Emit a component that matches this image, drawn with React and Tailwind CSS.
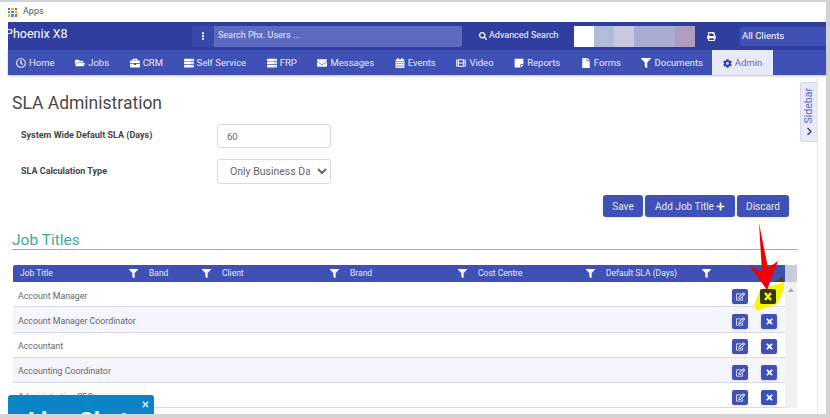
import {
  FaBriefcase,
  FaCalendarAlt,
  FaChevronRight,
  FaCog,
  FaEllipsisV,
  FaEnvelope,
  FaFile,
  FaFilm,
  FaFilter,
  FaFolderOpen,
  FaPlus,
  FaPrint,
  FaRegClock,
  FaRegEdit,
  FaSearch,
  FaServer,
  FaStickyNote,
  FaTimes,
} from 'react-icons/fa'

const NAV = [
  { label: 'Home', icon: FaRegClock },
  { label: 'Jobs', icon: FaFolderOpen },
  { label: 'CRM', icon: FaBriefcase },
  { label: 'Self Service', icon: FaServer },
  { label: 'FRP', icon: FaServer },
  { label: 'Messages', icon: FaEnvelope },
  { label: 'Events', icon: FaCalendarAlt },
  { label: 'Video', icon: FaFilm },
  { label: 'Reports', icon: FaStickyNote },
  { label: 'Forms', icon: FaFile },
  { label: 'Documents', icon: FaFilter },
]

const COLUMNS = ['Job Title', 'Band', 'Client', 'Brand', 'Cost Centre', 'Default SLA (Days)']

const ROWS = [
  'Account Manager',
  'Account Manager Coordinator',
  'Accountant',
  'Accounting Coordinator',
  'Administrative CEO',
]

const SWATCHES = ['bg-white', 'bg-[#b0bcd8]', 'bg-[#c8c8e0]', 'bg-[#a9aed0] w-[41px]', 'bg-[#b09cbc]']

function Row({ title, index }) {
  return (
    <div
      className={`flex h-[25.3px] items-center border-b border-[#d5d9ef] pl-[5px] pr-[8px] pt-[4px] text-[8.8px] text-[#666] ${
        index % 2 ? 'bg-[#f5f6fb]' : 'bg-white'
      }`}
    >
      <span className="flex-1">{title}</span>
      <button className="mr-[13px] flex h-[15px] w-[16px] items-center justify-center rounded-[2px] bg-[#3f51b5] text-white shadow-sm">
        <FaRegEdit className="text-[9px]" />
      </button>
      <button className="flex h-[15px] w-[16px] items-center justify-center rounded-[2px] bg-[#3f51b5] text-white shadow-sm">
        <FaTimes className="text-[9px]" />
      </button>
    </div>
  )
}

export default function App() {
  return (
    <div className="relative flex h-[418px] w-[830px] flex-col overflow-hidden bg-[#d4d4d4] font-['Roboto',sans-serif]">
      <div className="mt-[2px] flex h-[20px] w-[826px] items-center gap-[6px] bg-white pl-[8px] text-[9px] text-[#555]">
        <span className="grid h-[9px] w-[9px] grid-cols-3 gap-[1px]">
          <i className="bg-[#e8453c]" />
          <i className="bg-[#f4b400]" />
          <i className="bg-[#e8453c]" />
          <i className="bg-[#4285f4]" />
          <i className="bg-[#34a853]" />
          <i className="bg-[#f4b400]" />
          <i className="bg-[#f4b400]" />
          <i className="bg-[#4285f4]" />
          <i className="bg-[#e8453c]" />
        </span>
        Apps
      </div>

      <div className="flex w-[826px] flex-1 flex-col bg-white pl-[8px] min-h-0">
        <header className="flex h-[28px] items-center overflow-hidden bg-[#303f9f] text-white">
          <span className="-ml-[3px] w-[187px] shrink-0 pb-[3px] text-[12.5px]">Phoenix X8</span>
          <div className="flex h-[21px] w-[270px] shrink-0 overflow-hidden rounded-[2px]">
            <span className="flex w-[22px] items-center justify-center bg-[#3949ab] text-[8px]">
              <FaEllipsisV />
            </span>
            <span className="flex flex-1 items-center bg-[#5c6bc0] pl-[4px] text-[9px] text-[#e8eaf6]">
              Search Phx. Users ...
            </span>
          </div>
          <span className="ml-[17px] flex w-[95px] shrink-0 items-center gap-[2px] text-[9px]">
            <FaSearch className="text-[8px]" />
            Advanced Search
          </span>
          <div className="flex h-[21px] shrink-0">
            {SWATCHES.map((c) => (
              <span key={c} className={`w-[20px] ${c}`} />
            ))}
          </div>
          <FaPrint className="ml-[12px] shrink-0 text-[9px]" />
          <span className="ml-[24px] flex h-[19px] flex-1 items-center rounded-l-[2px] bg-[#3f51b5] pl-[2px] text-[9.5px]">
            All Clients
          </span>
        </header>

        <nav className="flex h-[25px] items-stretch bg-[#3f51b5] pl-[8px] text-[9.5px] text-[#e8eaf6] shadow-[0_1px_2px_rgba(0,0,0,0.25)]">
          <div className="flex items-center gap-[20.6px] pt-[1px]">
            {NAV.map(({ label, icon: Icon }) => (
              <span key={label} className="flex items-center gap-[3px]">
                <Icon className="text-[10px] text-white" />
                {label}
              </span>
            ))}
          </div>
          <span className="ml-[9px] flex w-[61px] items-center justify-center gap-[3px] bg-[#e8eaf6] pt-[1px] text-[#5c6bc0]">
            <FaCog className="text-[9px] text-[#303f9f]" />
            Admin
          </span>
        </nav>

        <div className="flex min-h-0 flex-1">
          <main className="relative w-[792px] shrink-0 pl-[4px] pr-[2px] min-h-0 overflow-hidden">
            <h1 className="mt-[18px] text-[17.5px] leading-[21px] text-[#4a4a4a]">SLA Administration</h1>

            <div className="mt-[10px] flex h-[24px] items-center pl-[9px]">
              <label className="w-[196px] text-[9px] font-bold text-[#444]">System Wide Default SLA (Days)</label>
              <input
                readOnly
                value="60"
                className="h-[24px] w-[114px] rounded-[3px] border border-[#d5d9ef] pl-[9px] text-[9.5px] text-[#666]"
              />
            </div>
            <div className="mt-[11px] flex h-[25px] items-center pl-[9px]">
              <label className="w-[196px] text-[9px] font-bold text-[#444]">SLA Calculation Type</label>
              <select className="h-[25px] w-[114px] rounded-[3px] border border-[#d5d9ef] bg-white pl-[8px] pr-[4px] text-[10.5px] text-[#666]">
                <option>Only Business Days</option>
              </select>
            </div>

            <div className="mt-[11px] flex h-[22px] justify-end gap-[2px] pr-[9px] text-[10px] text-[#e8eaf6]">
              <button className="w-[40px] rounded-[3px] bg-[#3f51b5] shadow">Save</button>
              <button className="flex w-[90px] items-center justify-center gap-[2px] rounded-[3px] bg-[#3f51b5] shadow">
                Add Job Title <FaPlus className="text-[9px] text-white" />
              </button>
              <button className="w-[52px] rounded-[3px] bg-[#3f51b5] shadow">Discard</button>
            </div>

            <h2 className="mt-[14px] border-b border-[#6cc5b5] text-[15.5px] leading-[18px] text-[#45a898]">
              Job Titles
            </h2>

            <div className="ml-[1px] mt-[15px] w-[784px]">
              <div className="flex h-[17px] items-center rounded-t-[2px] bg-[#3f51b5] pl-[7px] text-[8.5px] text-[#e8eaf6]">
                {COLUMNS.map((c, i) => (
                  <span
                    key={c}
                    className={`flex items-center justify-between ${i === 0 ? 'w-[129px]' : i === 1 ? 'w-[73px]' : i === 5 ? 'w-[116px]' : 'w-[128px]'}`}
                  >
                    {c}
                    <FaFilter className="mr-[11px] text-[9px] text-white" />
                  </span>
                ))}
                <span className="ml-auto h-full w-[12px] bg-[#c9cdd8]" />
              </div>
              <div className="flex">
                <div className="w-[772px]">
                  {ROWS.map((r, i) => (
                    <Row key={r} title={r} index={i} />
                  ))}
                </div>
                <div className="flex w-[12px] justify-center bg-[#f1f1f1] pt-[6px]">
                  <span className="h-0 w-0 border-x-[3px] border-b-[4px] border-x-transparent border-b-[#aaa]" />
                </div>
              </div>
            </div>
          </main>

          <aside className="flex w-[17px] shrink-0 flex-col pt-[7px]">
            <div className="flex h-[60px] flex-col items-center justify-between rounded-l-[3px] border border-r-0 border-[#d5d9ef] bg-[#e8eaf6] py-[5px] text-[10.5px] text-[#5c6bc0]">
              <span className="[writing-mode:vertical-rl] rotate-180">Sidebar</span>
              <FaChevronRight className="text-[9px] text-[#303f9f]" />
            </div>
          </aside>
          <div className="ml-auto w-[9px] border-l border-[#e3e5f3]" />
        </div>
      </div>

      <div className="h-[4px] shrink-0 bg-[#d4d4d4]" />

      {/* highlighter stroke + red arrow drawn over the screenshot */}
      <svg className="absolute left-[745px] top-[220px]" width="45" height="95" viewBox="0 0 45 95">
        <path d="M9 85 L12 91 L32 84 L39 70 L39 62 L15 70 Z" fill="#f6f600" />
        <path d="M30 62 L38 56 L39 62 Z" fill="#4a4a10" />
        <rect x="15" y="69" width="16" height="15" rx="2" fill="#33390f" />
        <path d="M20 73 L26 80 M26 73 L20 80" stroke="#f6f600" strokeWidth="2.5" />
        <path d="M14 3 L23 48 L33 41 L22 70 L4 45 L17 52 Z" fill="#f00000" />
      </svg>

      {/* live chat widget pinned to the corner */}
      <div className="absolute left-[8px] top-[395px] h-[19px] w-[146px] overflow-hidden rounded-t-[3px] bg-[#0a84c6] text-white">
        <span className="absolute left-[20px] top-[14px] text-[24px] font-bold leading-[24px]">Live Chat</span>
        <FaTimes className="absolute right-[4px] top-[5px] text-[9px] text-[#cde6f5]" />
      </div>
    </div>
  )
}
